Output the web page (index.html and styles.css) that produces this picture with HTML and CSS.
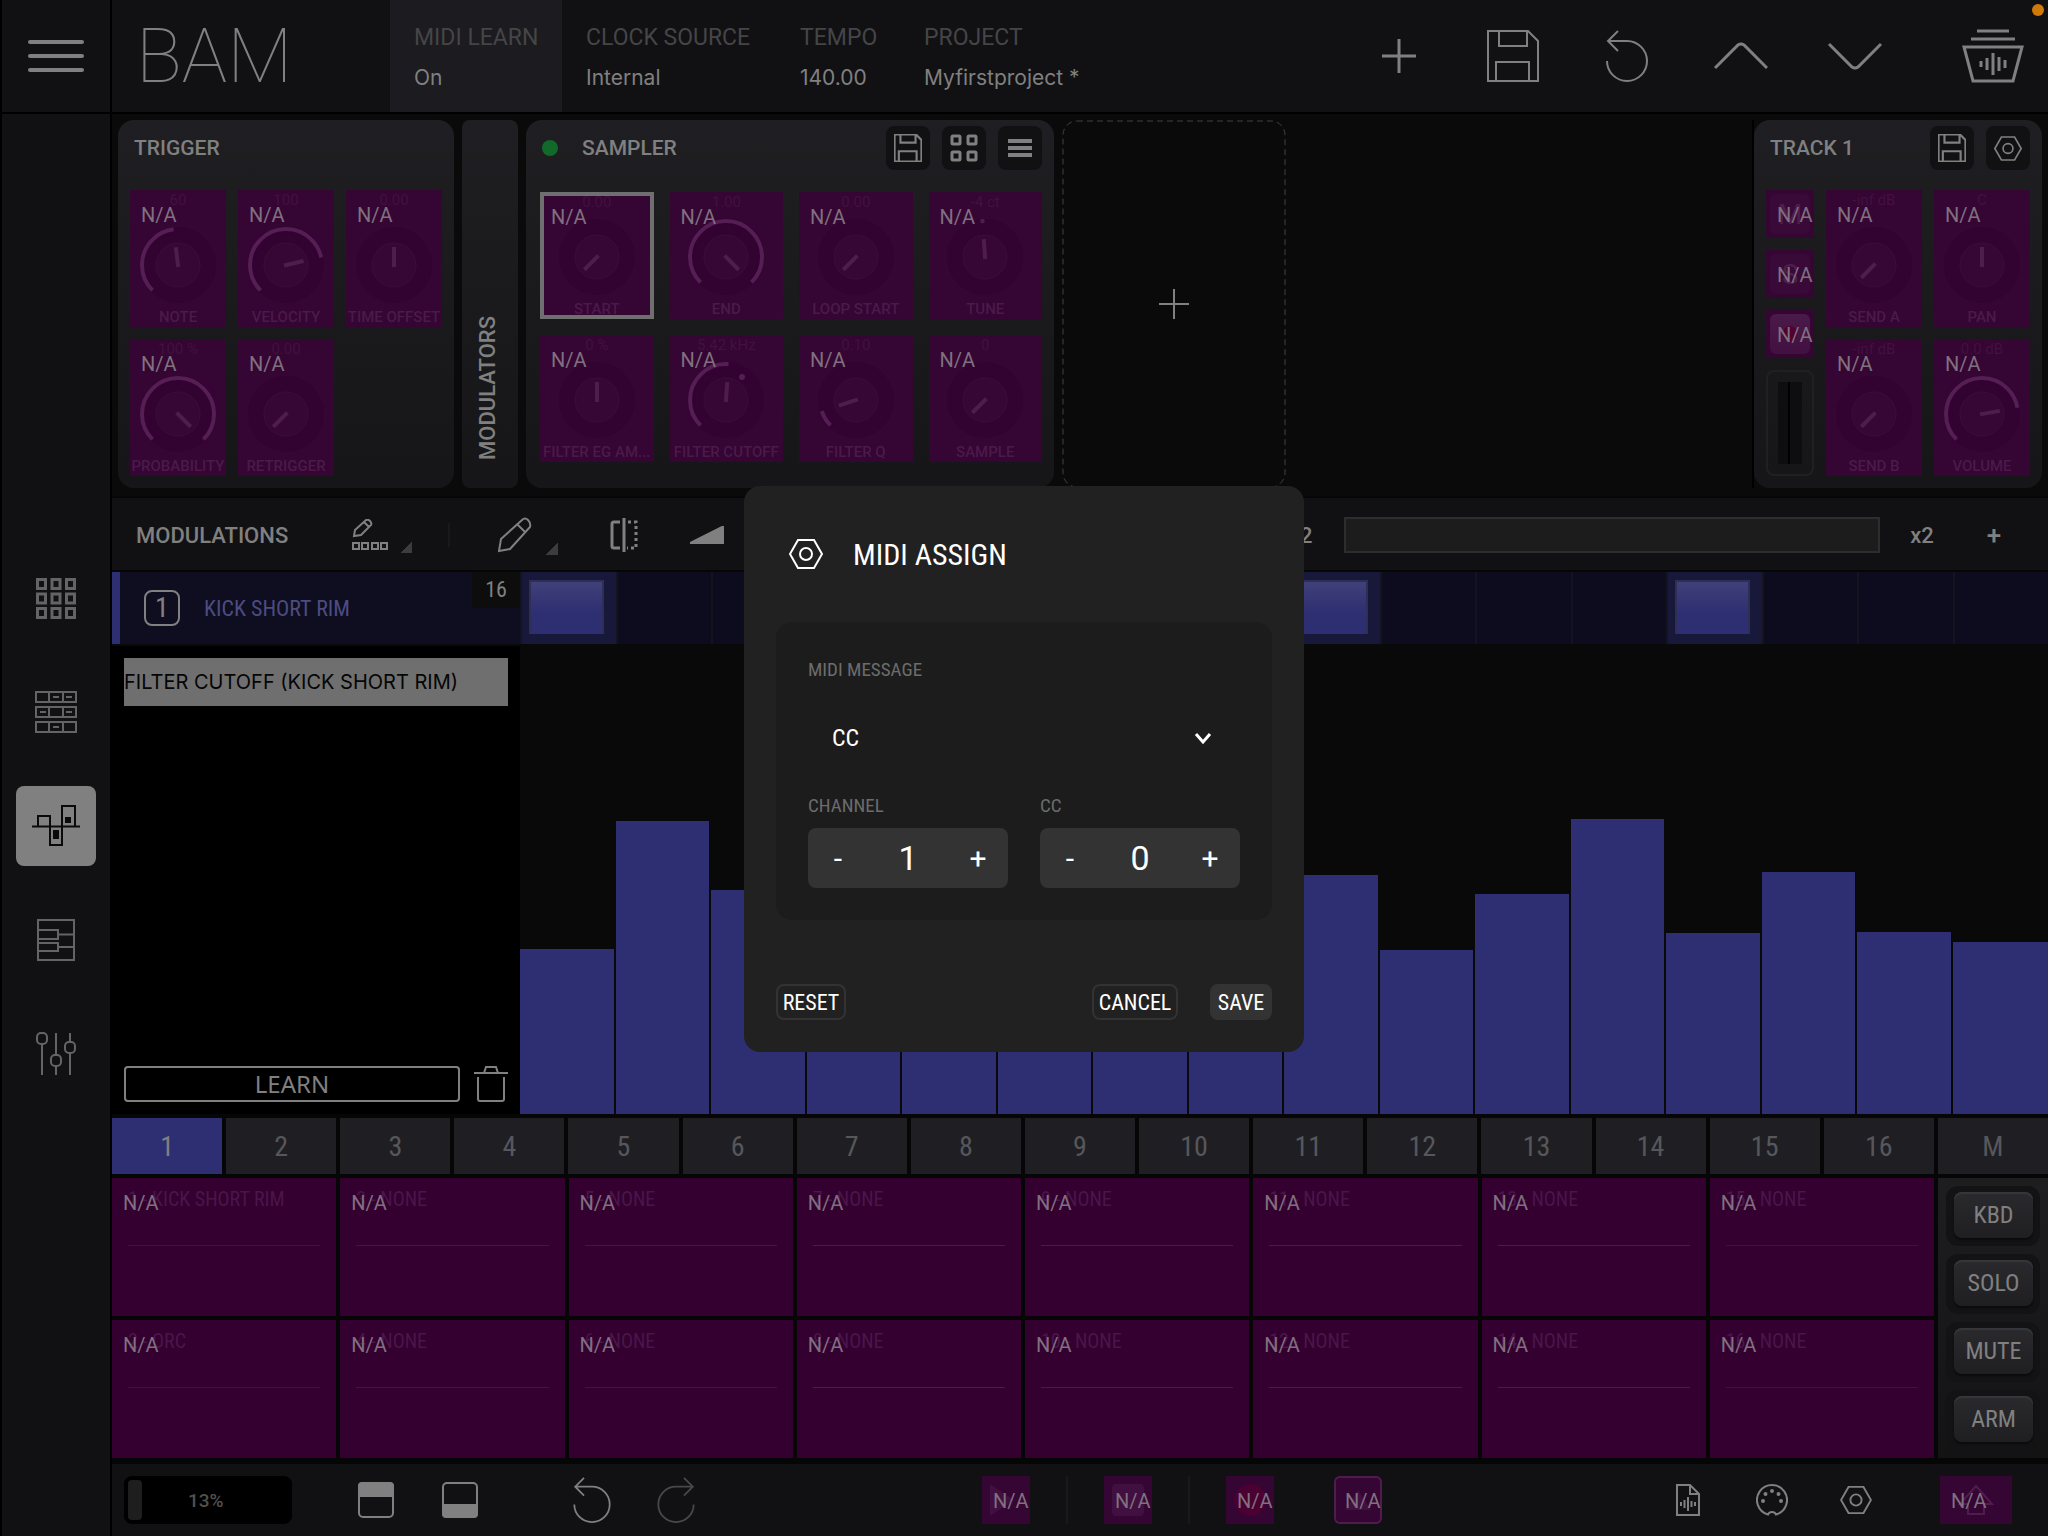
FILE: index.html
```html
<!DOCTYPE html>
<html lang="en">
<head>
<meta charset="utf-8">
<meta name="viewport" content="width=device-width, initial-scale=1">
<title>BAM</title>
<link rel="stylesheet" href="styles.css">
</head>
<body>
<svg class="defs" aria-hidden="true">
  <symbol id="save" viewBox="0 0 52 52"><path d="M1 1h40l10 10v40H1zM12 1v15h28V1M9 51V32h33v19"/></symbol>
  <symbol id="undo" viewBox="0 0 42 52"><path d="M1 31A20 20 0 1 0 21 11H2M12 1 2 11l10 10"/></symbol>
  <symbol id="hex" viewBox="0 0 34 30"><path d="M9 1h16l8 14-8 14H9L1 15z"/><circle cx="17" cy="15" r="6"/></symbol>
  <symbol id="dial" viewBox="0 0 80 80"><circle class="dial-well" cx="40" cy="40" r="38"/><circle class="dial-cap" cx="40" cy="40" r="22"/></symbol>
</svg>
<div class="app">
  <nav class="side" aria-label="Views">
    <button class="burger" aria-label="Menu"><i></i><i></i><i></i></button>
    <div class="views">
      <button aria-label="Pads"><svg width="42" height="42" viewBox="0 0 42 42" class="ic w3"><path d="M2.500 2.500h8v9h-8zM17 2.500h8v9h-8zM31.500 2.500h8v9h-8zM2.500 17h8v9h-8zM17 17h8v9h-8zM31.500 17h8v9h-8zM2.500 31.500h8v9h-8zM17 31.500h8v9h-8zM31.500 31.500h8v9h-8z"/></svg></button>
      <button aria-label="Patterns"><svg width="42" height="44" viewBox="0 0 42 44" class="ic"><path d="M1 2h40v10H1zM1 17h40v10H1zM1 32h40v10H1zM14 2v10M28 2v10M14 17v10M28 17v10M14 32v10M28 32v10M18 7h6M31 7h6M5 22h6M31 22h6M18 37h6"/></svg></button>
      <button class="on" aria-label="Modulations"><svg width="48" height="44" viewBox="0 0 48 44" class="ic"><path d="M0 22.500h48M6 22V12h12v10M18 23v18h12V22M30 22V2h13v20"/><path class="fill" d="M22 27h4v7h-4zM34 14h4v4h-4z"/></svg></button>
      <button aria-label="Piano roll"><svg width="38" height="42" viewBox="0 0 38 42" class="ic"><path d="M1 1h36v40H1zM1 11h20v9H1zM1 24h20v8H1zM21 15.500h16M21 28h16"/></svg></button>
      <button aria-label="Mixer"><svg width="40" height="44" viewBox="0 0 40 44" class="ic"><path d="M6 12v31M20 1v21M20 34v9M34 1v9M34 21v22"/><rect x="1" y="1" width="10" height="11" rx="4"/><rect x="15" y="23" width="10" height="11" rx="4"/><rect x="29" y="10" width="10" height="11" rx="4"/></svg></button>
    </div>
  </nav>

  <header class="top">
    <h1 class="logo">BAM</h1>
    <button class="info lit"><span>MIDI LEARN</span><b>On</b></button>
    <button class="info clock"><span>CLOCK SOURCE</span><b>Internal</b></button>
    <button class="info tempo"><span>TEMPO</span><b>140.00</b></button>
    <button class="info"><span>PROJECT</span><b>Myfirstproject *</b></button>
    <div class="tools">
      <button aria-label="Add"><svg width="34" height="34" viewBox="0 0 34 34" class="ic w3"><path d="M17 0v34M0 17h34"/></svg></button>
      <button aria-label="Save"><svg width="52" height="52" class="ic"><use href="#save"/></svg></button>
      <button aria-label="Undo"><svg width="42" height="52" class="ic"><use href="#undo"/></svg></button>
      <button aria-label="Previous"><svg width="54" height="28" viewBox="0 0 54 28" class="ic w3"><path d="M1 26 24 3q3-2 6 0l23 23"/></svg></button>
      <button aria-label="Next"><svg width="54" height="28" viewBox="0 0 54 28" class="ic w3"><path d="M1 2l23 23q3 2 6 0L53 2"/></svg></button>
      <button class="library" aria-label="Library"><svg width="62" height="56" viewBox="0 0 62 56" class="ic w3"><path d="M15 3h32M9 11h44M2 19h58l-9 34H11zM19 33v6M25 30v12M31 25v22M37 29v14M43 32v8"/></svg></button>
      <i class="rec"></i>
    </div>
  </header>

  <section class="devices">
    <article class="panel trigger">
      <h2>TRIGGER</h2>
      <div class="knobs three">
        <button class="knob"><em>60</em><svg class="dial"><use href="#dial"/><circle class="arc" cx="40" cy="40" r="36" pathLength="360" stroke-dasharray="128 360"/><path d="M40 42V22" transform="rotate(-7 40 40)"/></svg><span>NOTE</span><b>N/A</b></button>
        <button class="knob"><em>100</em><svg class="dial"><use href="#dial"/><circle class="arc" cx="40" cy="40" r="36" pathLength="360" stroke-dasharray="213 360"/><path d="M40 42V22" transform="rotate(77 40 40)"/></svg><span>VELOCITY</span><b>N/A</b></button>
        <button class="knob"><em>0.00</em><svg class="dial"><use href="#dial"/><path d="M40 42V22"/></svg><span>TIME OFFSET</span><b>N/A</b></button>
        <button class="knob"><em>100 %</em><svg class="dial"><use href="#dial"/><circle class="arc" cx="40" cy="40" r="36" pathLength="360" stroke-dasharray="270 360"/><path d="M40 42V22" transform="rotate(135 40 40)"/></svg><span>PROBABILITY</span><b>N/A</b></button>
        <button class="knob"><em>0.00</em><svg class="dial"><use href="#dial"/><path d="M40 42V22" transform="rotate(-135 40 40)"/></svg><span>RETRIGGER</span><b>N/A</b></button>
      </div>
    </article>
    <button class="panel modulators"><span>MODULATORS</span></button>
    <article class="panel sampler">
      <header><i class="led"></i><h2>SAMPLER</h2>
        <button class="sq" aria-label="Save preset"><svg width="28" height="28" viewBox="0 0 52 52" class="ic w4"><use href="#save"/></svg></button>
        <button class="sq" aria-label="Grid"><svg width="28" height="28" viewBox="0 0 28 28" class="ic w3"><rect x="2" y="2" width="8" height="8" rx="1"/><rect x="18" y="2" width="8" height="8" rx="1"/><rect x="2" y="18" width="8" height="8" rx="1"/><rect x="18" y="18" width="8" height="8" rx="1"/></svg></button>
        <button class="sq" aria-label="List"><svg width="24" height="18" viewBox="0 0 24 18" class="ic w4"><path d="M0 2h24M0 9h24M0 16h24"/></svg></button>
      </header>
      <div class="knobs four">
        <button class="knob sel"><em>0.00</em><svg class="dial"><use href="#dial"/><path d="M40 42V22" transform="rotate(-135 40 40)"/></svg><span>START</span><b>N/A</b></button>
        <button class="knob"><em>1.00</em><svg class="dial"><use href="#dial"/><circle class="arc" cx="40" cy="40" r="36" pathLength="360" stroke-dasharray="270 360"/><path d="M40 42V22" transform="rotate(135 40 40)"/></svg><span>END</span><b>N/A</b></button>
        <button class="knob"><em>0.00</em><svg class="dial"><use href="#dial"/><path d="M40 42V22" transform="rotate(-135 40 40)"/></svg><span>LOOP START</span><b>N/A</b></button>
        <button class="knob"><em>-4 ct</em><svg class="dial"><use href="#dial"/><path d="M40 42V22M40 6V2" transform="rotate(-4 40 40)"/></svg><span>TUNE</span><b>N/A</b></button>
        <button class="knob"><em>0 %</em><svg class="dial"><use href="#dial"/><path d="M40 42V22"/></svg><span>FILTER EG AM...</span><b>N/A</b></button>
        <button class="knob"><em>5.42 kHz</em><svg class="dial"><use href="#dial"/><circle class="arc" cx="40" cy="40" r="36" pathLength="360" stroke-dasharray="139 360"/><path d="M40 42V22" transform="rotate(4 40 40)"/><circle class="dot" cx="56" cy="17" r="3"/></svg><span>FILTER CUTOFF</span><b>N/A</b></button>
        <button class="knob"><em>0.10</em><svg class="dial"><use href="#dial"/><circle class="arc" cx="40" cy="40" r="36" pathLength="360" stroke-dasharray="27 360"/><path d="M40 42V22" transform="rotate(-108 40 40)"/></svg><span>FILTER Q</span><b>N/A</b></button>
        <button class="knob"><em>0</em><svg class="dial"><use href="#dial"/><path d="M40 42V22" transform="rotate(-135 40 40)"/></svg><span>SAMPLE</span><b>N/A</b></button>
      </div>
    </article>
    <button class="slot" aria-label="Add effect"><svg class="slot-edge" aria-hidden="true"><rect x="1" y="1" rx="14"/></svg><svg width="30" height="30" viewBox="0 0 30 30" class="ic"><path d="M15 0v30M0 15h30"/></svg></button>
    <div class="master">
    <article class="panel track">
      <header><h2>TRACK 1</h2>
        <button class="sq" aria-label="Save track"><svg width="28" height="28" viewBox="0 0 52 52" class="ic w4"><use href="#save"/></svg></button>
        <button class="sq" aria-label="Track settings"><svg width="28" height="25" class="ic"><use href="#hex"/></svg></button>
      </header>
      <div class="track-body">
        <div class="minis">
          <button class="mini"><span>M</span><b>N/A</b></button>
          <button class="mini"><span>S</span><b>N/A</b></button>
          <button class="mini arm"><span><i></i></span><b>N/A</b></button>
          <div class="meter"><i></i></div>
        </div>
        <div class="knobs two">
          <button class="knob"><em>-inf dB</em><svg class="dial"><use href="#dial"/><path d="M40 42V22" transform="rotate(-135 40 40)"/></svg><span>SEND A</span><b>N/A</b></button>
          <button class="knob"><em>C</em><svg class="dial"><use href="#dial"/><path d="M40 42V22"/></svg><span>PAN</span><b>N/A</b></button>
          <button class="knob"><em>-inf dB</em><svg class="dial"><use href="#dial"/><path d="M40 42V22" transform="rotate(-135 40 40)"/></svg><span>SEND B</span><b>N/A</b></button>
          <button class="knob"><em>0.0 dB</em><svg class="dial"><use href="#dial"/><circle class="arc" cx="40" cy="40" r="36" pathLength="360" stroke-dasharray="215 360"/><path d="M40 42V22" transform="rotate(80 40 40)"/></svg><span>VOLUME</span><b>N/A</b></button>
        </div>
      </div>
    </article>
    </div>
  </section>

  <section class="bar">
    <h2>MODULATIONS</h2>
    <button class="more" aria-label="Draw steps"><svg width="36" height="32" viewBox="0 0 36 32" class="ic"><path d="M2 17l1-6L14 1q2-1 4 1t1 4L9 16zM12 3l5 5M1 24h6v6H1zM10 24h6v6h-6zM20 24h6v6h-6zM29 24h6v6h-6z"/></svg><i></i></button>
    <i class="rule"></i>
    <button class="more pencil" aria-label="Pencil"><svg width="34" height="36" viewBox="0 0 34 36" class="ic"><path d="M1 34l2-12L24 3q3-3 6 0t2 7L12 32zM19 7l8 8"/></svg><i></i></button>
    <button class="mirror" aria-label="Mirror"><svg width="28" height="34" viewBox="0 0 28 34" class="ic w3"><path d="M10 4H4q-2 0-2 2v22q0 2 2 2h6M14 0v34"/><path stroke-dasharray="3 3" d="M18 4h8v26h-9"/></svg></button>
    <button class="ramp" aria-label="Ramp"><svg width="34" height="18" viewBox="0 0 34 18" class="ic"><path class="fill" d="M0 17 34 0v18H0z"/></svg></button>
    <div class="zoomer">
      <button>/2</button><div class="overview"></div><button>x2</button><button class="plus">+</button>
    </div>
  </section>

  <section class="lane">
    <div class="lane-head"><b class="num">1</b><span>KICK SHORT RIM</span><i>16</i></div>
    <div class="steps">
      <button class="hit" aria-label="Step 1"><i></i></button><button aria-label="Step 2"></button><button aria-label="Step 3"></button><button aria-label="Step 4"></button>
      <button class="hit" aria-label="Step 5"><i></i></button><button aria-label="Step 6"></button><button aria-label="Step 7"></button><button aria-label="Step 8"></button>
      <button class="hit" aria-label="Step 9"><i></i></button><button aria-label="Step 10"></button><button aria-label="Step 11"></button><button aria-label="Step 12"></button>
      <button class="hit" aria-label="Step 13"><i></i></button><button aria-label="Step 14"></button><button aria-label="Step 15"></button><button aria-label="Step 16"></button>
    </div>
  </section>

  <section class="editor">
    <div class="targets">
      <p>FILTER CUTOFF (KICK SHORT RIM)</p>
      <div><button class="learn">LEARN</button><button aria-label="Delete"><svg width="34" height="36" viewBox="0 0 34 36" class="ic"><path d="M0 7h34M10 7l2-6h10l2 6M4 11v22q0 2 2 2h22q2 0 2-2V11"/></svg></button></div>
    </div>
    <div class="bars">
      <i style="height:35.3%"></i><i style="height:62.6%"></i><i style="height:47.900%"></i><i style="height:40%"></i><i style="height:40%"></i><i style="height:40%"></i><i style="height:40%"></i><i style="height:40%"></i><i style="height:51.100%"></i><i style="height:35%"></i><i style="height:47%"></i><i style="height:63%"></i><i style="height:38.700%"></i><i style="height:51.700%"></i><i style="height:38.900%"></i><i style="height:36.800%"></i>
    </div>
  </section>

  <nav class="patterns" aria-label="Patterns">
    <button class="on">1</button><button>2</button><button>3</button><button>4</button><button>5</button><button>6</button><button>7</button><button>8</button><button>9</button><button>10</button><button>11</button><button>12</button><button>13</button><button>14</button><button>15</button><button>16</button><button>M</button>
  </nav>

  <section class="pads">
    <div class="pad-grid">
      <button><span>1 - KICK SHORT RIM</span><i></i><b>N/A</b></button>
      <button><span>3 - NONE</span><i class="pk"></i><b>N/A</b></button>
      <button><span>5 - NONE</span><i class="rd"></i><b>N/A</b></button>
      <button><span>7 - NONE</span><i class="or"></i><b>N/A</b></button>
      <button><span>9 - NONE</span><i class="or"></i><b>N/A</b></button>
      <button><span>11 - NONE</span><i class="gr"></i><b>N/A</b></button>
      <button><span>13 - NONE</span><i class="gr"></i><b>N/A</b></button>
      <button><span>15 - NONE</span><i></i><b>N/A</b></button>
      <button><span>2 - ORC</span><i></i><b>N/A</b></button>
      <button><span>4 - NONE</span><i class="rd"></i><b>N/A</b></button>
      <button><span>6 - NONE</span><i class="rd"></i><b>N/A</b></button>
      <button><span>8 - NONE</span><i class="or"></i><b>N/A</b></button>
      <button><span>10 - NONE</span><i class="gr"></i><b>N/A</b></button>
      <button><span>12 - NONE</span><i class="gr"></i><b>N/A</b></button>
      <button><span>14 - NONE</span><i class="gr"></i><b>N/A</b></button>
      <button><span>16 - NONE</span><i></i><b>N/A</b></button>
    </div>
    <div class="modes"><div><button>KBD</button></div><div><button>SOLO</button></div><div><button>MUTE</button></div><div><button>ARM</button></div></div>
  </section>

  <footer class="foot">
    <div class="cpu"><i></i><span>13%</span></div>
    <div class="wins">
      <button aria-label="Top panel"><svg width="36" height="36" viewBox="0 0 36 36" class="ic"><rect x="1" y="1" width="34" height="34" rx="4"/><path class="fill" d="M1 4q0-3 3-3h28q3 0 3 3v10H1z"/></svg></button>
      <button aria-label="Bottom panel"><svg width="36" height="36" viewBox="0 0 36 36" class="ic"><rect x="1" y="1" width="34" height="34" rx="4"/><path class="fill" d="M1 23h34v9q0 3-3 3H4q-3 0-3-3z"/></svg></button>
    </div>
    <div class="hist">
      <button aria-label="Undo"><svg width="38" height="46" class="ic"><use href="#undo"/></svg></button>
      <button class="dim" aria-label="Redo"><svg width="38" height="46" viewBox="0 0 42 52" class="ic"><path d="M41 31A20 20 0 1 1 21 11h19M30 1l10 10-10 10"/></svg></button>
    </div>
    <div class="transport">
      <button class="na"><svg viewBox="0 0 48 48"><path d="M8 8l24 16L8 40z"/></svg><b>N/A</b></button><i class="sep"></i>
      <button class="na"><svg viewBox="0 0 48 48"><rect x="8" y="8" width="32" height="32" rx="4"/></svg><b>N/A</b></button><i class="sep"></i>
      <button class="na"><svg viewBox="0 0 48 48"><circle class="red" cx="24" cy="24" r="16"/></svg><b>N/A</b></button>
      <button class="na ring"><svg viewBox="0 0 48 48"><path d="M24 14l13 20H11z"/></svg><b>N/A</b></button>
    </div>
    <div class="extras">
      <button aria-label="Audio file"><svg width="24" height="32" viewBox="0 0 24 32" class="ic"><path d="M1 1h13l9 9v21H1zM14 1v9h9M5 18v4M8.500 16v8M12 13v14M15.500 17v6M19 18v4"/></svg></button>
      <button aria-label="MIDI"><svg width="32" height="32" viewBox="0 0 32 32" class="ic"><path d="M12 30.500A15 15 0 1 1 20 30.500Q19 28 16 28t-4 2.500z"/><circle class="fill" cx="7" cy="17" r="1"/><circle class="fill" cx="9.500" cy="10" r="1"/><circle class="fill" cx="16" cy="7" r="1"/><circle class="fill" cx="22.500" cy="10" r="1"/><circle class="fill" cx="25" cy="17" r="1"/></svg></button>
      <button aria-label="Settings"><svg width="32" height="28" class="ic"><use href="#hex"/></svg></button>
      <button class="na wide"><svg viewBox="0 0 72 48"><path class="line" d="M36 10l16 18h-8v10H28V28h-8z"/></svg><b>N/A</b></button>
    </div>
  </footer>
</div>

<div class="overlay">
  <form class="modal" role="dialog" aria-labelledby="dlg-title">
    <header><svg width="34" height="30" class="ic"><use href="#hex"/></svg><h2 id="dlg-title">MIDI ASSIGN</h2></header>
    <div class="box">
      <label for="msg">MIDI MESSAGE</label>
      <div class="select"><select id="msg"><option>CC</option></select><svg width="18" height="14" viewBox="0 0 18 14" class="ic w3"><path d="M2 3l7 8 7-8"/></svg></div>
      <div class="pair">
        <div><label for="ch">CHANNEL</label><div class="stepper"><button type="button">-</button><input id="ch" value="1"><button type="button">+</button></div></div>
        <div><label for="cc">CC</label><div class="stepper"><button type="button">-</button><input id="cc" value="0"><button type="button">+</button></div></div>
      </div>
    </div>
    <footer><button type="button" class="reset">RESET</button><button type="button" class="cancel">CANCEL</button><button type="button" class="ok">SAVE</button></footer>
  </form>
</div>
</body>
</html>
```
FILE: styles.css
```css
* { box-sizing: border-box; }
body { margin: 0; background: #060606; color: #808080; font-family: Roboto, sans-serif; }
button { margin: 0; padding: 0; border: 0; background: none; color: inherit; font: inherit; display: flex; align-items: center; justify-content: center; }
h1, h2, p { margin: 0; font-weight: 400; }
i, em, b { font-style: normal; font-weight: 400; }
.defs { position: absolute; width: 0; height: 0; }
.ic { fill: none; stroke: currentColor; stroke-width: 2; flex: none; display: block; }
.w3 { stroke-width: 3; }
.w4 { stroke-width: 4; }
.fill { fill: currentColor; }

/* Frame */
.app { min-height: 100vh; display: grid; grid-template-columns: 112px minmax(0, 1fr); grid-template-rows: 114px 384px 74px 74px minmax(300px, 1fr) 64px 286px 72px; }
.side { grid-row: 1 / -1; background: #111113; border-left: 2px solid #000; border-right: 2px solid #000; display: flex; flex-direction: column; }
.burger { height: 114px; border-bottom: 2px solid #000; flex-direction: column; gap: 10px; }
.burger i { width: 56px; height: 4px; border-radius: 2px; background: #808080; }
.views { flex: 1; padding-top: 2px; display: flex; flex-direction: column; align-items: center; justify-content: center; gap: 34px; }
.views button { width: 80px; height: 80px; border-radius: 8px; color: #646464; }
.views .on { background: #808080; color: #0a0a0a; }

.top { background: #111113; border-bottom: 2px solid #000; display: flex; align-items: stretch; position: relative; }
.logo { width: 278px; padding-left: 24px; font-size: 76px; line-height: 112px; font-weight: 100; }
.info { flex-direction: column; align-items: flex-start; gap: 10px; padding: 4px 24px 0; white-space: nowrap; font-size: 23px; line-height: 30px; }
.info span { color: #454547; }
.info b { font-family: Inter, sans-serif; font-size: 21px; }
.lit { width: 172px; background: #1b1b20; }
.clock { width: 214px; }
.tempo { width: 124px; }
.tools { margin-left: auto; display: flex; }
.tools button { width: 114px; }
.tools .library { width: 110px; margin-left: 26px; }
.rec { position: absolute; right: 4px; top: 4px; width: 12px; height: 12px; border-radius: 50%; background: #cf7a08; }

/* Devices */
.devices { background: #0a0a0a; padding: 6px 0 8px 6px; display: flex; gap: 8px; border-bottom: 2px solid #060606; }
.panel { background: linear-gradient(#1f1f23, #1a1a1c 50%, #161618); border-radius: 16px; }
.panel h2 { font-size: 21px; line-height: 28px; font-weight: 500; }
.trigger { width: 336px; padding: 14px 12px 12px; display: flex; flex-direction: column; }
.trigger h2 { padding-left: 4px; margin-bottom: 28px; }
.knobs { flex: 1; display: grid; grid-auto-rows: 1fr; gap: 12px; }
.three { grid-template-columns: repeat(3, 1fr); }
.four { grid-template-columns: repeat(4, 1fr); gap: 16px; }
.two { grid-template-columns: repeat(2, 1fr); }
.knob { position: relative; min-width: 0; flex-direction: column; background: #350533; color: #4b1a4a; font-size: 15px; line-height: 20px; font-weight: 500; }
.knob em { margin-bottom: auto; color: #43113f; }
.knob span { margin-top: 2px; white-space: nowrap; }
.knob b, .mini b, .pad-grid b, .na b { position: absolute; left: 11px; top: 15px; font-size: 20px; line-height: 20px; font-weight: 400; color: #80707f; }
.sel { outline: 4px solid #6f6f6f; outline-offset: -4px; }
.dial { width: 80px; height: 80px; flex: none; fill: none; stroke: #4f1d4d; stroke-width: 4; }
.dial-well { fill: #320230; stroke: none; }
.dial-cap { fill: #360635; stroke: #3c0c3a; stroke-width: 1; }
.arc { transform: rotate(135deg); transform-origin: 40px 40px; stroke: #551e54; }
.dot { fill: #551e54; stroke: none; }
.modulators { width: 56px; border-radius: 8px; align-items: flex-end; padding: 0 4px 28px 0; }
.modulators span { writing-mode: vertical-rl; transform: rotate(180deg); font-size: 22px; line-height: 28px; font-weight: 500; }
.sampler { width: 528px; padding: 6px 12px 26px 14px; display: flex; flex-direction: column; }
.sampler header, .track header { display: flex; align-items: center; gap: 12px; height: 44px; margin-bottom: 22px; }
.sampler h2, .track h2 { flex: 1; }
.led { width: 16px; height: 16px; border-radius: 50%; background: #11692a; margin: 0 12px 0 2px; }
.sq { width: 44px; height: 44px; border-radius: 8px; background: #111113; }
.slot { position: relative; width: 224px; height: 368px; }
.slot-edge { position: absolute; inset: 0; width: 100%; height: 100%; }
.slot-edge rect { width: calc(100% - 2px); height: calc(100% - 2px); fill: none; stroke: #404040; stroke-width: 1; stroke-dasharray: 6 4; }
.master { margin-left: auto; padding-right: 6px; border-left: 2px solid #000; display: flex; }
.track { width: 288px; padding: 6px 12px 12px; display: flex; flex-direction: column; }
.track header { margin-bottom: 20px; padding-left: 4px; }
.track-body { flex: 1; display: flex; gap: 12px; }
.minis { width: 48px; display: flex; flex-direction: column; gap: 12px; }
.mini { position: relative; height: 48px; background: #350533; color: #4f1d4d; font-size: 28px; }
.mini span { width: 40px; height: 40px; border-radius: 6px; background: #390a38; display: flex; align-items: center; justify-content: center; }
.mini.arm span { background: linear-gradient(#4a1a48, #421041); }
.mini.arm i { width: 14px; height: 16px; border-radius: 50%; background: #520030; }
.meter { flex: 1; border: 2px solid #202022; border-radius: 8px; padding: 10px; }
.meter i { display: block; height: 100%; background: linear-gradient(90deg, transparent 10px, #000 10px, #000 12px, transparent 12px) #0e0e10; }

/* Toolbar */
.bar { background: #111113; border-bottom: 2px solid #060606; padding: 2px 0 0 24px; display: flex; align-items: center; color: #808080; }
.bar h2 { width: 216px; font-size: 22px; font-weight: 500; }
.more { justify-content: space-between; align-items: flex-end; width: 60px; }
.more i { width: 12px; height: 12px; margin-bottom: -2px; background: linear-gradient(135deg, transparent 50%, #3c3c40 50%); }
.rule { width: 2px; height: 24px; margin: 0 48px 0 36px; background: #19191b; }
.mirror { margin-left: 52px; }
.ramp { margin-left: 52px; }
.zoomer { margin-left: auto; padding-right: 24px; display: flex; align-items: center; font-size: 22px; font-weight: 500; }
.zoomer button { width: 84px; }
.zoomer .plus { width: 60px; font-size: 26px; }
.overview { width: 536px; height: 36px; background: #1c1c1d; border: 2px solid #2d2d31; }

/* Lane */
.lane, .editor { display: grid; grid-template-columns: 408px minmax(0, 1fr); }
.lane { border-bottom: 2px solid #090909; }
.lane-head { background: #0e0e20; border-left: 8px solid #2e2e72; display: flex; align-items: center; padding-left: 24px; font: 22px "Roboto Condensed", Roboto, sans-serif; color: #4c4c80; }
.num { width: 36px; height: 36px; margin-right: 24px; border: 2px solid #808080; border-radius: 8px; color: #808080; font-size: 28px; line-height: 32px; text-align: center; }
.lane-head i { align-self: flex-start; margin-left: auto; width: 48px; height: 36px; border-radius: 0 0 0 4px; background: #0d0d0e; color: #808080; line-height: 36px; text-align: center; }
.steps, .bars { display: grid; grid-template-columns: repeat(16, 1fr); }
.steps button { background: #0c0c1e; border-left: 2px solid #141420; align-items: stretch; justify-content: stretch; padding: 8px 12px 10px 7px; }
.steps .hit { background: #18183a; }
.steps i { flex: 1; border: 2px solid #2f2f55; border-bottom: 0; background: linear-gradient(#40407a, #2e2e72 60%); }

.targets { background: #000; padding: 12px; display: flex; flex-direction: column; justify-content: space-between; }
.targets p { height: 48px; background: #6f6f6f; color: #050505; font: 20px/48px Inter, sans-serif; white-space: nowrap; }
.targets div { display: flex; gap: 14px; }
.learn { flex: 1; height: 36px; border: 2px solid #808080; border-radius: 4px; font: 24px/32px "Noto Sans", sans-serif; }
.bars { align-items: end; background: #090909; }
.bars i { background: #2e2e72; margin-right: 2px; }
.bars i:last-child { margin-right: 0; }

/* Patterns and pads */
.patterns { padding: 4px 0; display: grid; grid-template-columns: repeat(17, 1fr); gap: 4px; }
.patterns button { background: #1f1f23; color: #57575b; font: 28px "Roboto Condensed", Roboto, sans-serif; }
.patterns .on { background: #2e2e72; color: #808080; }
.pads { display: grid; grid-template-columns: minmax(0, 1fr) 110px; gap: 4px; padding-bottom: 6px; }
.pad-grid { display: grid; grid-template-columns: repeat(8, 1fr); grid-auto-rows: 1fr; gap: 4px; }
.pad-grid button { position: relative; flex-direction: column; align-items: stretch; justify-content: flex-start; background: #330030; padding: 11px 16px; text-align: left; font: 20px/20px "Roboto Condensed", Roboto, sans-serif; color: #4a164a; }
.pad-grid b { font-family: Roboto, sans-serif; }
.pad-grid i { margin-top: 36px; height: 1px; background: #3a1058; }
.pad-grid .pk { background: #500a58; }
.pad-grid .rd { background: #520f38; }
.pad-grid .or { background: #4e1e36; }
.pad-grid .gr { background: #3e2048; }
.modes { background: linear-gradient(#1e1e21, #131314); padding: 8px; display: flex; flex-direction: column; gap: 8px; }
.modes div { height: 60px; border-radius: 12px; background: #131315; padding: 6px 7px 8px 8px; }
.modes button { width: 100%; height: 100%; border-radius: 8px; background: linear-gradient(#2a2a2e, #1f1f22); box-shadow: inset 0 2px 1px #37373b, 0 2px 2px #0a0a0a; font: 24px "Roboto Condensed", Roboto, sans-serif; }

/* Footer */
.foot { background: #111113; display: flex; align-items: center; padding: 0 36px 0 12px; }
.cpu { width: 168px; height: 48px; border-radius: 8px; background: #000; padding: 4px; display: flex; align-items: center; }
.cpu i { width: 14px; height: 40px; border-radius: 4px; background: #1e1e1e; }
.cpu span { margin-left: 46px; font-size: 19px; font-weight: 500; color: #505050; }
.wins { margin-left: 66px; display: flex; gap: 48px; }
.hist { margin-left: 95px; display: flex; gap: 46px; }
.dim { opacity: .5; }
.transport { margin-left: auto; display: flex; align-items: center; }
.na { position: relative; width: 48px; height: 48px; background: #350533; fill: #410f40; }
.na svg { width: 100%; height: 100%; }
.na .red { fill: #4a0030; }
.na .line { fill: none; stroke: #4f1d4d; stroke-width: 2; }
.sep { width: 2px; height: 48px; margin: 0 36px; background: #19191b; }
.transport .ring { margin-left: 60px; border-radius: 6px; box-shadow: inset 0 0 0 2px #4f1d4d; }
.extras { margin-left: 294px; display: flex; align-items: center; gap: 52px; }
.extras button:first-child { margin-right: 4px; }
.extras .wide { width: 72px; margin-left: 16px; }

/* Dialog */
.overlay { position: fixed; inset: 0; padding-top: 2px; display: grid; place-items: center; }
.modal { width: 560px; padding: 32px; border-radius: 16px; background: #212121; color: #fff; font-family: "Roboto Condensed", Roboto, sans-serif; }
.modal header { height: 72px; margin-bottom: 32px; padding-left: 13px; display: flex; align-items: center; gap: 30px; }
.modal h2 { font-size: 30px; }
.box { padding: 34px 32px 32px; border-radius: 16px; background: #1c1c1c; }
.box label { display: block; font-size: 19px; line-height: 28px; color: #6c6c6c; }
.select { display: grid; align-items: center; margin: 24px 0; }
.select select { grid-area: 1 / 1; height: 60px; padding: 0 24px; border: 0; appearance: none; background: none; color: #fff; font: inherit; font-size: 24px; }
.select svg { grid-area: 1 / 1; justify-self: end; margin-right: 28px; pointer-events: none; }
.pair { display: grid; grid-template-columns: repeat(2, minmax(0, 1fr)); gap: 32px; }
.stepper { height: 60px; margin-top: 8px; border-radius: 8px; background: #333; display: flex; font-family: Roboto, sans-serif; font-size: 30px; }
.stepper button { width: 60px; }
.stepper input { flex: 1; min-width: 0; padding: 0; border: 0; background: none; color: #fff; font: inherit; font-size: 34px; text-align: center; }
.modal footer { margin-top: 64px; display: flex; align-items: center; }
.modal footer button { height: 36px; border: 2px solid #333; border-radius: 8px; font-size: 22px; }
.reset { width: 70px; margin-right: auto; }
.cancel { width: 86px; margin-right: 32px; }
.ok { width: 62px; background: #333; }
```
